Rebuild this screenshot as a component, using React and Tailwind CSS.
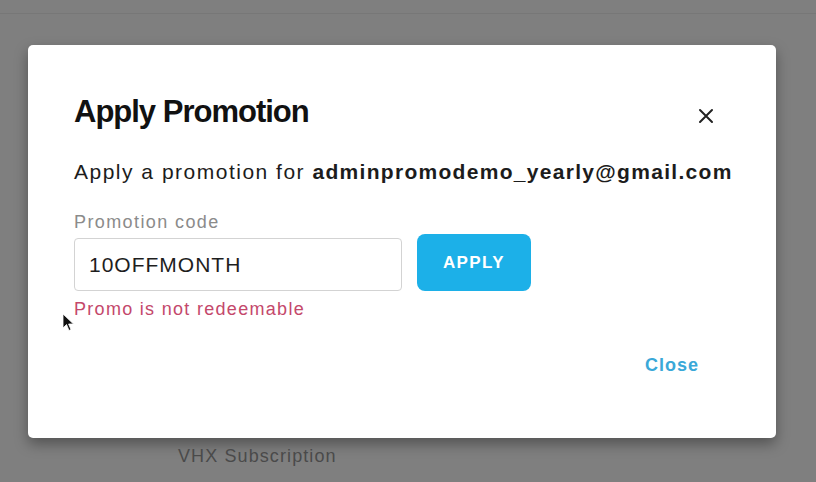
export default function App() {
  return (
    <div className="w-[816px] h-[482px] overflow-hidden bg-[#7f7f7f] relative" style={{ fontFamily: '"Liberation Sans", Arial, sans-serif' }}>
      <div className="h-[14px] border-b border-[#777]" />
      <div className="ml-[28px] mt-[31px] w-[748px] h-[393px] bg-white rounded-[5px] shadow-[0_6px_14px_rgba(0,0,0,0.35)] pl-[46px] pr-[46px] pt-[49px] flex flex-col">
        <div className="flex items-start justify-between">
          <h1 className="text-[31px] leading-[36px] font-bold text-[#111] tracking-[-1px]">Apply Promotion</h1>
          <svg width="16" height="16" viewBox="0 0 16 16" className="mt-[14px] mr-[16px]">
            <path d="M2 2 L14 14 M14 2 L2 14" stroke="#222" strokeWidth="2" strokeLinecap="round" />
          </svg>
        </div>
        <p className="mt-[29px] text-[21px] leading-[26px] text-[#1c1c1c] tracking-[1.5px] whitespace-nowrap">
          Apply a promotion for <span className="font-bold tracking-[1.3px]">adminpromodemo_yearly@gmail.com</span>
        </p>
        <div className="mt-[27px] text-[18px] leading-[20px] text-[#8b8b8b] tracking-[1.4px]">Promotion code</div>
        <div className="mt-[2px] flex items-end gap-[15px]">
          <div className="w-[328px] h-[53px] border border-[#d3d3d3] rounded-[4px] flex items-center pl-[14px] text-[21px] text-[#1e1e1e] tracking-[1px]">10OFFMONTH</div>
          <button className="w-[114px] h-[57px] bg-[#1cb0e8] rounded-[8px] text-white font-bold text-[17px] tracking-[1.4px]">APPLY</button>
        </div>
        <div className="mt-[7px] text-[18px] leading-[22px] text-[#c4486b] tracking-[1.3px]">Promo is not redeemable</div>
        <div className="mt-[32px] flex justify-end pr-[31px]">
          <span className="text-[18px] font-bold text-[#3aa8d8] tracking-[1px]">Close</span>
        </div>
      </div>
      <div className="ml-[178px] mt-[5px] text-[18px] text-[#4a4a4a] tracking-[1.1px]">VHX Subscription</div>
      <svg className="absolute left-[62px] top-[313px]" width="14" height="20" viewBox="0 0 14 20">
        <path d="M1 1 L1 15 L4.5 11.5 L7 17.5 L9 16.6 L6.6 11 L11.5 11 Z" fill="#111" stroke="#fff" strokeWidth="0.8" />
      </svg>
    </div>
  );
}
